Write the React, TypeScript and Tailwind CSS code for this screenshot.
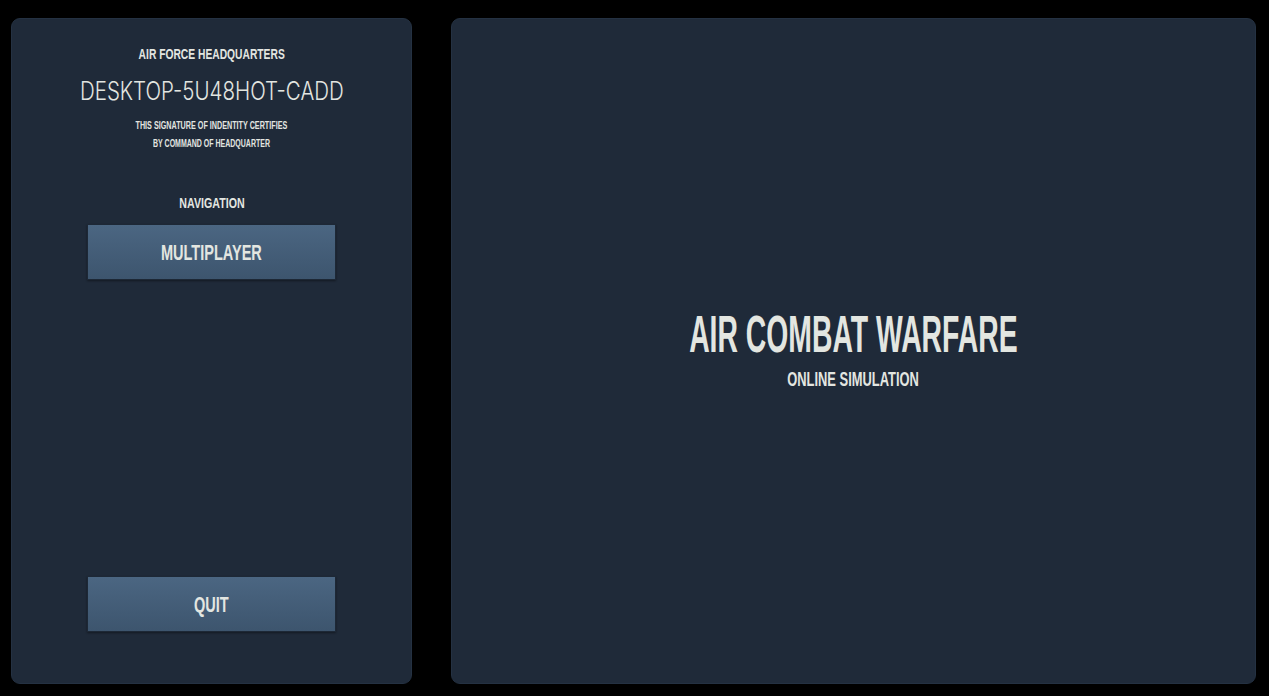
function MenuButton({ label }: { label: string }) {
  return (
    <button className="w-[249px] h-[56px] shrink-0 border border-[#1d2836] bg-gradient-to-b from-[#4b6682] to-[#3d556e] text-[#e3e6e1] text-[22px] font-bold font-['Liberation_Sans',sans-serif] shadow-[0_1px_2px_rgba(0,0,0,0.4)]">
      <span className="inline-block scale-x-[0.66]">{label}</span>
    </button>
  );
}

export default function App() {
  return (
    <div className="w-[1269px] h-[696px] bg-black flex gap-[39px] pl-[11px] pr-[13px] pt-[18px] pb-[12px] font-['Liberation_Sans',sans-serif] text-[#e3e6e1]">
      {/* Sidebar */}
      <aside className="w-[401px] shrink-0 rounded-[9px] bg-[#1f2a39] border border-[#243142] flex flex-col items-center pt-[27px] pb-[51px]">
        <div className="text-[15px] font-bold leading-none scale-x-[0.685]">AIR FORCE HEADQUARTERS</div>
        <div className="mt-[18px] text-[25px] font-light leading-none font-['Inter',sans-serif] scale-x-[0.82]">
          DESKTOP-5U48HOT-CADD
        </div>
        <div className="mt-[17px] text-[10px] font-bold leading-none scale-x-[0.72]">
          THIS SIGNATURE OF INDENTITY CERTIFIES
        </div>
        <div className="mt-[8px] text-[10px] font-bold leading-none scale-x-[0.7]">BY COMMAND OF HEADQUARTER</div>
        <div className="mt-[46px] text-[15px] font-bold leading-none scale-x-[0.71]">NAVIGATION</div>
        <div className="mt-[14px]">
          <MenuButton label="MULTIPLAYER" />
        </div>
        <div className="mt-auto">
          <MenuButton label="QUIT" />
        </div>
      </aside>

      {/* Main */}
      <main className="flex-1 rounded-[9px] bg-[#1f2a39] border border-[#243142] flex flex-col items-center justify-center pb-[6px]">
        <h1 className="text-[52px] font-bold leading-none scale-x-[0.545]">AIR COMBAT WARFARE</h1>
        <div className="mt-[9px] text-[20px] font-bold leading-none scale-x-[0.645]">ONLINE SIMULATION</div>
      </main>
    </div>
  );
}
